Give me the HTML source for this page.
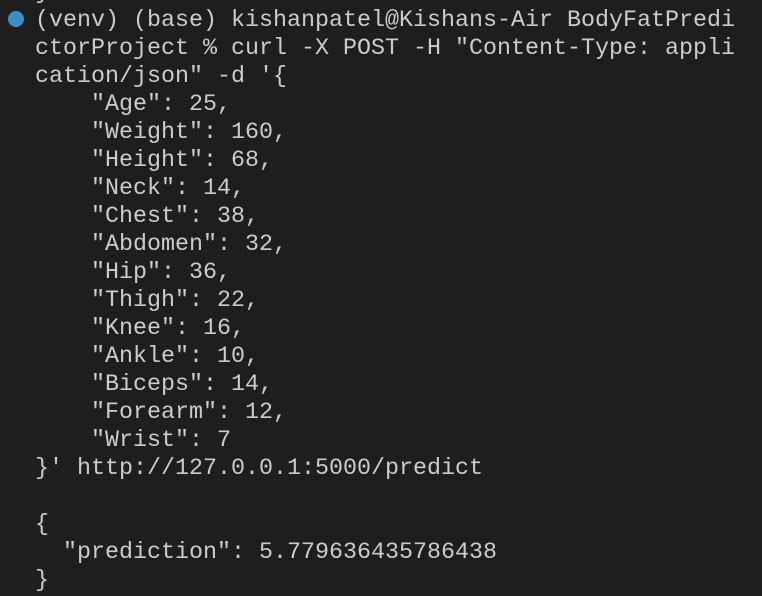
<!DOCTYPE html>
<html><head><meta charset="utf-8"><style>
html,body{margin:0;padding:0;background:#1e1e1e;width:762px;height:596px;overflow:hidden}
pre{position:absolute;left:35px;top:-21px;margin:0;font-family:"Liberation Mono",monospace;font-size:23.33px;line-height:28px;color:#cccccc;white-space:pre}
.dot{position:absolute;left:8px;top:11px;width:16px;height:16px;border-radius:50%;background:#3b8ec3}
</style></head><body>
<div class="dot"></div>
<pre>}
(venv) (base) kishanpatel@Kishans-Air BodyFatPredi
ctorProject % curl -X POST -H "Content-Type: appli
cation/json" -d '{
    "Age": 25,
    "Weight": 160,
    "Height": 68,
    "Neck": 14,
    "Chest": 38,
    "Abdomen": 32,
    "Hip": 36,
    "Thigh": 22,
    "Knee": 16,
    "Ankle": 10,
    "Biceps": 14,
    "Forearm": 12,
    "Wrist": 7
}' http://127.0.0.1:5000/predict

{
  "prediction": 5.779636435786438
}</pre>
</body></html>
